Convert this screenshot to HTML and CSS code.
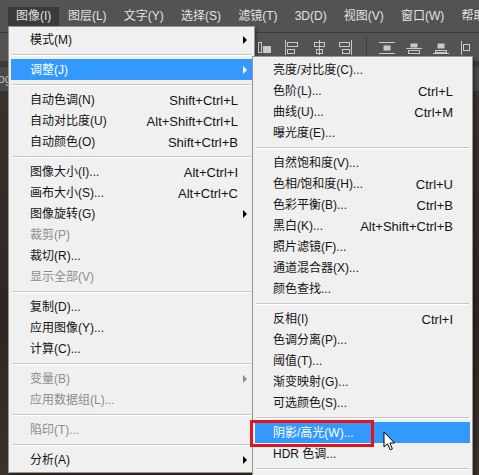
FILE: index.html
```html
<!DOCTYPE html>
<html lang="zh-CN">
<head>
<meta charset="utf-8">
<link rel="stylesheet" href="styles.css">
</head>
<body>
<div class="screen">
  <nav class="menubar">
    <span class="mb-item active">图像(I)</span>
    <span class="mb-item">图层(L)</span>
    <span class="mb-item">文字(Y)</span>
    <span class="mb-item">选择(S)</span>
    <span class="mb-item">滤镜(T)</span>
    <span class="mb-item">3D(D)</span>
    <span class="mb-item">视图(V)</span>
    <span class="mb-item">窗口(W)</span>
    <span class="mb-item">帮助(H)</span>
  </nav>
  <div class="toolbar">
    <svg class="ticon" width="16" height="16" viewBox="0 0 16 16"><rect x="1.5" y="3.5" width="3" height="10" fill="none" stroke="#c9c9c9"/><rect x="6" y="7" width="8" height="7" fill="#c9c9c9"/></svg>
    <svg class="ticon" width="16" height="16" viewBox="0 0 16 16"><path d="M1.5 1v15" stroke="#c9c9c9"/><rect x="3.5" y="3.5" width="10" height="4" fill="none" stroke="#c9c9c9"/><rect x="3.5" y="10.5" width="7" height="4" fill="none" stroke="#c9c9c9"/></svg>
    <svg class="ticon" width="16" height="16" viewBox="0 0 16 16"><path d="M8.5 1v15" stroke="#c9c9c9"/><rect x="3.5" y="3.5" width="10" height="4" fill="none" stroke="#c9c9c9"/><rect x="5.5" y="10.5" width="6" height="4" fill="none" stroke="#c9c9c9"/></svg>
    <svg class="ticon" width="16" height="16" viewBox="0 0 16 16"><path d="M13.5 1v15" stroke="#c9c9c9"/><rect x="1.5" y="3.5" width="10" height="4" fill="none" stroke="#c9c9c9"/><rect x="4.5" y="10.5" width="7" height="4" fill="none" stroke="#c9c9c9"/></svg>
    <span class="tsep"></span>
    <svg class="ticon" width="16" height="16" viewBox="0 0 16 16"><path d="M0 3.5h16M0 14.5h16" stroke="#c9c9c9"/><rect x="4.5" y="6.5" width="7" height="5" fill="#c9c9c9"/></svg>
    <svg class="ticon" width="16" height="16" viewBox="0 0 16 16"><path d="M0 9.5h16" stroke="#c9c9c9"/><rect x="4.5" y="4.5" width="7" height="4" fill="#c9c9c9"/><rect x="2.5" y="11.5" width="11" height="3" fill="none" stroke="#c9c9c9"/></svg>
    <svg class="ticon" width="16" height="16" viewBox="0 0 16 16"><path d="M0 14.5h16" stroke="#c9c9c9"/><rect x="4.5" y="4.5" width="7" height="5" fill="#c9c9c9"/><rect x="2.5" y="11.5" width="11" height="2" fill="none" stroke="#c9c9c9"/></svg>
    <svg class="ticon" width="16" height="16" viewBox="0 0 16 16"><path d="M1.5 2v14" stroke="#c9c9c9"/><rect x="3.5" y="5.5" width="6" height="6" fill="none" stroke="#c9c9c9"/></svg>
  </div>
  <div class="workspace">
    <div class="tabbar"><span class="tab">og</span></div>
    <div class="canvas"></div>
  </div>

  <div class="menu main-menu">
    <div class="row sub"><span class="label">模式(M)</span><span class="key"></span><span class="arrow"></span></div>
    <div class="sep"></div>
    <div class="row sub hl"><span class="label">调整(J)</span><span class="key"></span><span class="arrow"></span></div>
    <div class="sep"></div>
    <div class="row"><span class="label">自动色调(N)</span><span class="key">Shift+Ctrl+L</span><span class="arrow"></span></div>
    <div class="row"><span class="label">自动对比度(U)</span><span class="key">Alt+Shift+Ctrl+L</span><span class="arrow"></span></div>
    <div class="row"><span class="label">自动颜色(O)</span><span class="key">Shift+Ctrl+B</span><span class="arrow"></span></div>
    <div class="sep"></div>
    <div class="row"><span class="label">图像大小(I)...</span><span class="key">Alt+Ctrl+I</span><span class="arrow"></span></div>
    <div class="row"><span class="label">画布大小(S)...</span><span class="key">Alt+Ctrl+C</span><span class="arrow"></span></div>
    <div class="row sub"><span class="label">图像旋转(G)</span><span class="key"></span><span class="arrow"></span></div>
    <div class="row dis"><span class="label">裁剪(P)</span><span class="key"></span><span class="arrow"></span></div>
    <div class="row"><span class="label">裁切(R)...</span><span class="key"></span><span class="arrow"></span></div>
    <div class="row dis"><span class="label">显示全部(V)</span><span class="key"></span><span class="arrow"></span></div>
    <div class="sep"></div>
    <div class="row"><span class="label">复制(D)...</span><span class="key"></span><span class="arrow"></span></div>
    <div class="row"><span class="label">应用图像(Y)...</span><span class="key"></span><span class="arrow"></span></div>
    <div class="row"><span class="label">计算(C)...</span><span class="key"></span><span class="arrow"></span></div>
    <div class="sep"></div>
    <div class="row dis sub"><span class="label">变量(B)</span><span class="key"></span><span class="arrow"></span></div>
    <div class="row dis"><span class="label">应用数据组(L)...</span><span class="key"></span><span class="arrow"></span></div>
    <div class="sep"></div>
    <div class="row dis"><span class="label">陷印(T)...</span><span class="key"></span><span class="arrow"></span></div>
    <div class="sep"></div>
    <div class="row sub"><span class="label">分析(A)</span><span class="key"></span><span class="arrow"></span></div>
  </div>

  <div class="menu sub-menu">
    <div class="row"><span class="label">亮度/对比度(C)...</span><span class="key"></span><span class="arrow"></span></div>
    <div class="row"><span class="label">色阶(L)...</span><span class="key">Ctrl+L</span><span class="arrow"></span></div>
    <div class="row"><span class="label">曲线(U)...</span><span class="key">Ctrl+M</span><span class="arrow"></span></div>
    <div class="row"><span class="label">曝光度(E)...</span><span class="key"></span><span class="arrow"></span></div>
    <div class="sep"></div>
    <div class="row"><span class="label">自然饱和度(V)...</span><span class="key"></span><span class="arrow"></span></div>
    <div class="row"><span class="label">色相/饱和度(H)...</span><span class="key">Ctrl+U</span><span class="arrow"></span></div>
    <div class="row"><span class="label">色彩平衡(B)...</span><span class="key">Ctrl+B</span><span class="arrow"></span></div>
    <div class="row"><span class="label">黑白(K)...</span><span class="key">Alt+Shift+Ctrl+B</span><span class="arrow"></span></div>
    <div class="row"><span class="label">照片滤镜(F)...</span><span class="key"></span><span class="arrow"></span></div>
    <div class="row"><span class="label">通道混合器(X)...</span><span class="key"></span><span class="arrow"></span></div>
    <div class="row"><span class="label">颜色查找...</span><span class="key"></span><span class="arrow"></span></div>
    <div class="sep"></div>
    <div class="row"><span class="label">反相(I)</span><span class="key">Ctrl+I</span><span class="arrow"></span></div>
    <div class="row"><span class="label">色调分离(P)...</span><span class="key"></span><span class="arrow"></span></div>
    <div class="row"><span class="label">阈值(T)...</span><span class="key"></span><span class="arrow"></span></div>
    <div class="row"><span class="label">渐变映射(G)...</span><span class="key"></span><span class="arrow"></span></div>
    <div class="row"><span class="label">可选颜色(S)...</span><span class="key"></span><span class="arrow"></span></div>
    <div class="sep"></div>
    <div class="row hl"><span class="label">阴影/高光(W)...</span><span class="key"></span><span class="arrow"></span></div>
    <div class="row"><span class="label">HDR 色调...</span><span class="key"></span><span class="arrow"></span></div>
    <div class="sep"></div>
  </div>

  <div class="callout"></div>

  <svg class="cursor" width="14" height="21" viewBox="0 0 14 21">
    <path d="M1 1 L1 16 L4.5 12.8 L7.2 18.8 L9.4 17.8 L6.8 12 L11.5 12 Z" fill="#fff" stroke="#000" stroke-width="1" stroke-linejoin="round"/>
  </svg>
</div>
</body>
</html>
```

FILE: styles.css
```css
* {
  box-sizing: border-box;
  margin: 0;
  padding: 0;
}

html, body {
  width: 479px;
  height: 475px;
  overflow: hidden;
}

body {
  background: #2d2724;
  font-family: "Liberation Sans", "Noto Sans CJK SC", sans-serif;
  font-size: 12px;
}

.screen {
  position: relative;
  width: 479px;
  height: 475px;
  display: flex;
  flex-direction: column;
  overflow: hidden;
}

.menubar {
  height: 33px;
  flex: none;
  display: flex;
  padding-left: 8px;
  background: #535353;
  border-bottom: 1px solid #3c3c3c;
  color: #e2e2e2;
}

.mb-item {
  margin-top: 7px;
  height: 19px;
  line-height: 19px;
  padding: 0 8.6px;
  white-space: nowrap;
}

.mb-item:first-child {
  padding: 0 8px;
}

.mb-item.active {
  background: #3b3b3b;
}

.toolbar {
  height: 28px;
  flex: none;
  display: flex;
  align-items: center;
  gap: 11px;
  padding-left: 257px;
  background: #535353;
}

.ticon {
  flex: none;
  display: block;
}

.tsep {
  width: 1px;
  height: 20px;
  background: #3e3e3e;
  margin: 0 1px;
}

.workspace {
  flex: 1;
  display: flex;
  flex-direction: column;
  background: #3a3a3a;
}

.tabbar {
  height: 24px;
  margin-top: 6px;
  background: #4a4a4a;
  color: #bdbdbd;
  line-height: 24px;
  font-size: 12px;
  white-space: nowrap;
}

.tab {
  margin-left: -2px;
}

.canvas {
  flex: 1;
  background: linear-gradient(180deg, #3a322d 0%, #2e2622 60%, #3b322b 100%);
}

.menu {
  position: absolute;
  background: #f0f0f0;
  border: 1px solid #979797;
  padding: 2px;
  box-shadow: 2px 2px 3px rgba(0, 0, 0, 0.35);
}

.main-menu {
  left: 8px;
  top: 26px;
  width: 247px;
}

.sub-menu {
  left: 252px;
  top: 56px;
  width: 221px;
  height: 440px;
}

.row {
  display: grid;
  grid-template-columns: 1fr auto 14px;
  height: 21px;
  padding-top: 2px;
  line-height: 19px;
  padding-left: 19px;
  color: #141414;
  white-space: nowrap;
}

.sub-menu .row {
  padding-left: 18px;
  grid-template-columns: 1fr auto 17px;
}

.row.hl {
  background: #3399ff;
  color: #ffffff;
}

.row.dis {
  color: #8d8d8d;
}

.key {
  font-size: 13px;
}

.arrow {
  display: flex;
  align-items: center;
  justify-content: center;
  margin-top: -2px;
}

.row.sub .arrow::before {
  content: "";
  width: 0;
  height: 0;
  border-left: 4px solid #000;
  border-top: 4px solid transparent;
  border-bottom: 4px solid transparent;
}

.row.sub.hl .arrow::before {
  border-left-color: #ffffff;
}

.row.sub.dis .arrow::before {
  border-left-color: #8d8d8d;
}

.sep {
  height: 9px;
  padding-top: 4px;
  margin: 0 1px;
}

.sep::before {
  content: "";
  display: block;
  height: 1px;
  background: #c6c6c6;
  border-bottom: 1px solid #ffffff;
  box-sizing: content-box;
}

.callout {
  position: absolute;
  left: 250px;
  top: 420px;
  width: 124px;
  height: 27px;
  border: 3px solid #e3141b;
}

.cursor {
  position: absolute;
  left: 383px;
  top: 431px;
}
```
